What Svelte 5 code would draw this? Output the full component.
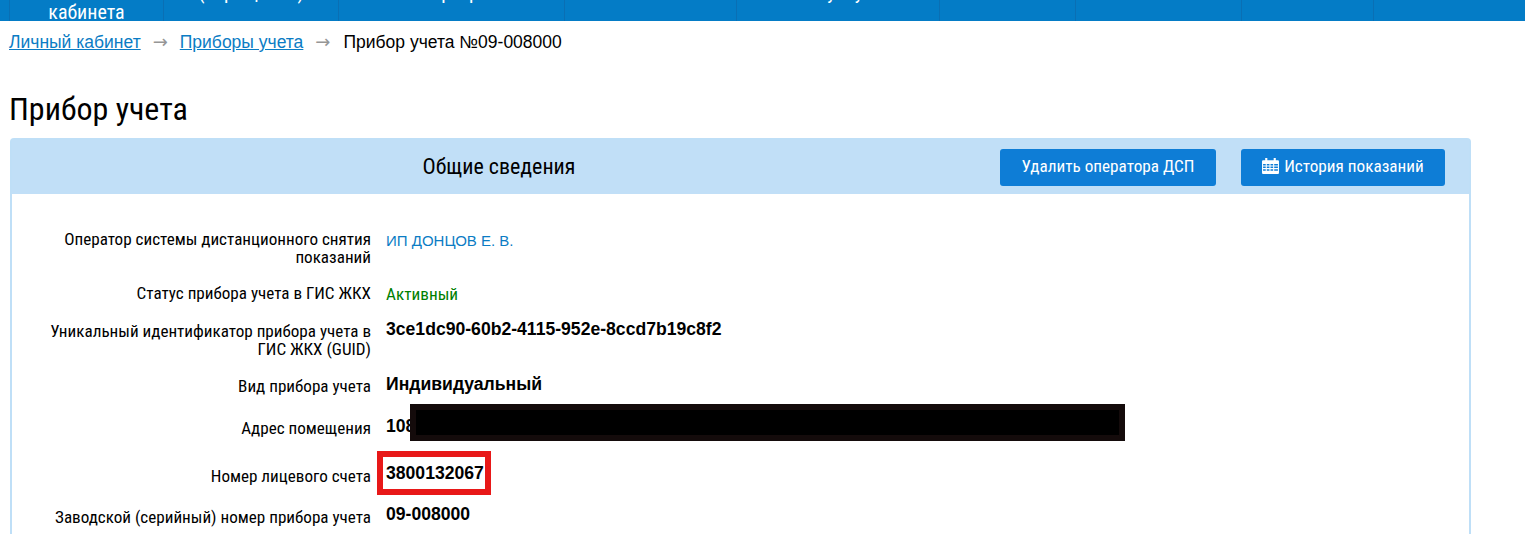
<script>
  const navCells = [
    { width: 154, label: 'кабинета', last: true },
    { width: 175, label: '(обращения)' },
    { width: 226, label: 'Квартиры' },
    { width: 172, label: '' },
    { width: 203, label: 'Оплата услуг ЖКХ' },
    { width: 136, label: '' },
    { width: 166, label: '' },
    { width: 132, label: '' },
    { width: 97, label: '' }
  ];
  const rows = [
    { label: 'Оператор системы дистанционного снятия показаний', value: 'ИП ДОНЦОВ Е. В.', kind: 'link', h: 54 },
    { label: 'Статус прибора учета в ГИС ЖКХ', value: 'Активный', kind: 'ok', h: 38 },
    { label: 'Уникальный идентификатор прибора учета в ГИС ЖКХ (GUID)', value: '3ce1dc90-60b2-4115-952e-8ccd7b19c8f2', kind: 'bold', h: 55 },
    { label: 'Вид прибора учета', value: 'Индивидуальный', kind: 'bold', h: 42 },
    { label: 'Адрес помещения', value: '108', kind: 'bold', h: 48 }
  ];
</script>

<nav class="nav">
  <div class="nav-inner">
    {#each navCells as c}
      <div class="nav-cell" class:last={c.last} style="width:{c.width}px"><span>{c.label}</span></div>
    {/each}
  </div>
</nav>

<main class="page">
  <div class="crumbs">
    <a href="#a">Личный кабинет</a>
    <span class="arrow">→</span>
    <a href="#b">Приборы учета</a>
    <span class="arrow">→</span>
    <span class="cur">Прибор учета №09-008000</span>
  </div>

  <h1>Прибор учета</h1>

  <section class="panel">
    <header class="panel-head">
      <h2>Общие сведения</h2>
      <div class="btns">
        <button class="b1">Удалить оператора ДСП</button>
        <button class="b2">
          <svg width="17" height="18" viewBox="0 0 16 17" aria-hidden="true">
            <path fill="#fff" fill-rule="evenodd" d="M1 3h2V1h2v2h6V1h2v2h2a1 1 0 0 1 1 1v11a1 1 0 0 1-1 1H1a1 1 0 0 1-1-1V4a1 1 0 0 1 1-1zM1 6.500V8h2.500V6.500zM4.500 6.500V8H7V6.500zM8 6.500V8h2.500V6.500zM11.500 6.500V8H15V6.500zM1 9v1.500h2.500V9zM4.500 9v1.500H7V9zM8 9v1.500h2.500V9zM11.500 9v1.500H15V9zM1 11.500V13h2.500v-1.500zM4.500 11.500V13H7v-1.500zM8 11.500V13h2.500v-1.500zM11.500 11.500V13H15v-1.500z"/>
          </svg>
          История показаний
        </button>
      </div>
    </header>

    <div class="body">
      {#each rows as r}
        <div class="row" style="height:{r.h}px">
          <div class="lbl">{r.label}</div>
          <div class="val {r.kind}">
            {#if r.kind === 'link'}<a href="#c">{r.value}</a>{:else}{r.value}{/if}
            {#if r.value === '108'}<span class="redact"></span>{/if}
          </div>
        </div>
      {/each}
      <div class="row acct">
        <div class="lbl">Номер лицевого счета</div>
        <div class="val bold">3800132067<span class="mark"></span></div>
      </div>
      <div class="row serial">
        <div class="lbl">Заводской (серийный) номер прибора учета</div>
        <div class="val bold">09-008000</div>
      </div>
    </div>
  </section>
</main>

<style>
  :global(html), :global(body) { margin: 0; height: 534px; overflow: hidden; background: #fff; }
  :global(body) { font-family: "Liberation Sans", Arial, sans-serif; color: #000; }

  .nav { height: 21px; background: #047cc6; overflow: hidden; }
  .nav-inner { display: flex; height: 21px; padding-left: 9px; }
  .nav-cell {
    box-sizing: border-box; border-left: 1px solid #0a6fb4; height: 21px;
    text-align: center; font: 20px/20px Roboto, sans-serif; font-stretch: 87%; color: #fff;
  }
  .nav-cell span { display: block; margin-top: -18px; white-space: nowrap; }
  .nav-cell.last span { margin-top: 2px; }

  .page { padding-left: 9px; width: 1470px; }
  .crumbs { font-size: 17.5px; line-height: 20px; padding-top: 11px; display: flex; gap: 11px; height: 32px; }
  .crumbs a { color: #0b7cc4; }
  .arrow { color: #969696; font-family: "DejaVu Sans", sans-serif; font-size: 18px; margin: 0 1px; }
  .crumbs .cur { color: #000; margin-left: 1px; }

  h1 { font: 400 32px/38px Roboto, sans-serif; font-stretch: 87%; margin: 26px 0 10px; }

  .panel { border: 2px solid #bfdff7; border-bottom: 0; border-radius: 4px 4px 0 0; width: 1461px; height: 400px; box-sizing: border-box; margin-left: 1px; }
  .panel-head { height: 54px; background: #c1dff7; display: flex; align-items: center; }
  h2 { font: 400 22px/24px Roboto, sans-serif; font-stretch: 87%; margin: 0 0 0 -1px; width: 976px; text-align: center; }
  .btns { display: flex; gap: 25px; margin-left: 13px; }
  button {
    height: 37px; border: 0; border-radius: 3px; background: #0e7dd6; color: #fff;
    font: 17.2px/20px Roboto, sans-serif; font-stretch: 87%; padding: 0 0 2px; display: flex; align-items: center; justify-content: center; gap: 5px;
  }
  .b1 { width: 216px; }
  .b2 { width: 204px; }

  .body { padding-top: 36px; }
  .row { display: flex; align-items: flex-start; }
  .lbl { box-sizing: border-box; width: 359px; padding-left: 19px; text-align: right; font: 17.1px/18px Roboto, sans-serif; font-stretch: 87%; color: #000; flex: none; }
  .val { margin-left: 15px; font-size: 16px; line-height: 18px; position: relative; }
  .val.link { font-size: 15px; margin-top: 2px; }
  .val.link a { color: #0b7cc4; text-decoration: none; }
  .val.ok { font: 17.2px/18px Roboto, sans-serif; font-stretch: 87%; color: #008000; margin-top: 1px; }
  .val.bold { font-weight: 700; font-size: 17.6px; line-height: 20px; margin-top: -3px; }
  .redact { position: absolute; left: 24px; top: -12px; width: 703px; height: 25px; background: #000; border: 6px solid #140b0b; }
  .acct { height: 41px; }
  .acct .val.bold, .serial .val.bold { margin-top: -4px; }
  .mark { position: absolute; left: -9px; top: -12px; width: 102px; height: 32px; border: 6px solid #e81818; }
  .serial { height: 30px; }
</style>
